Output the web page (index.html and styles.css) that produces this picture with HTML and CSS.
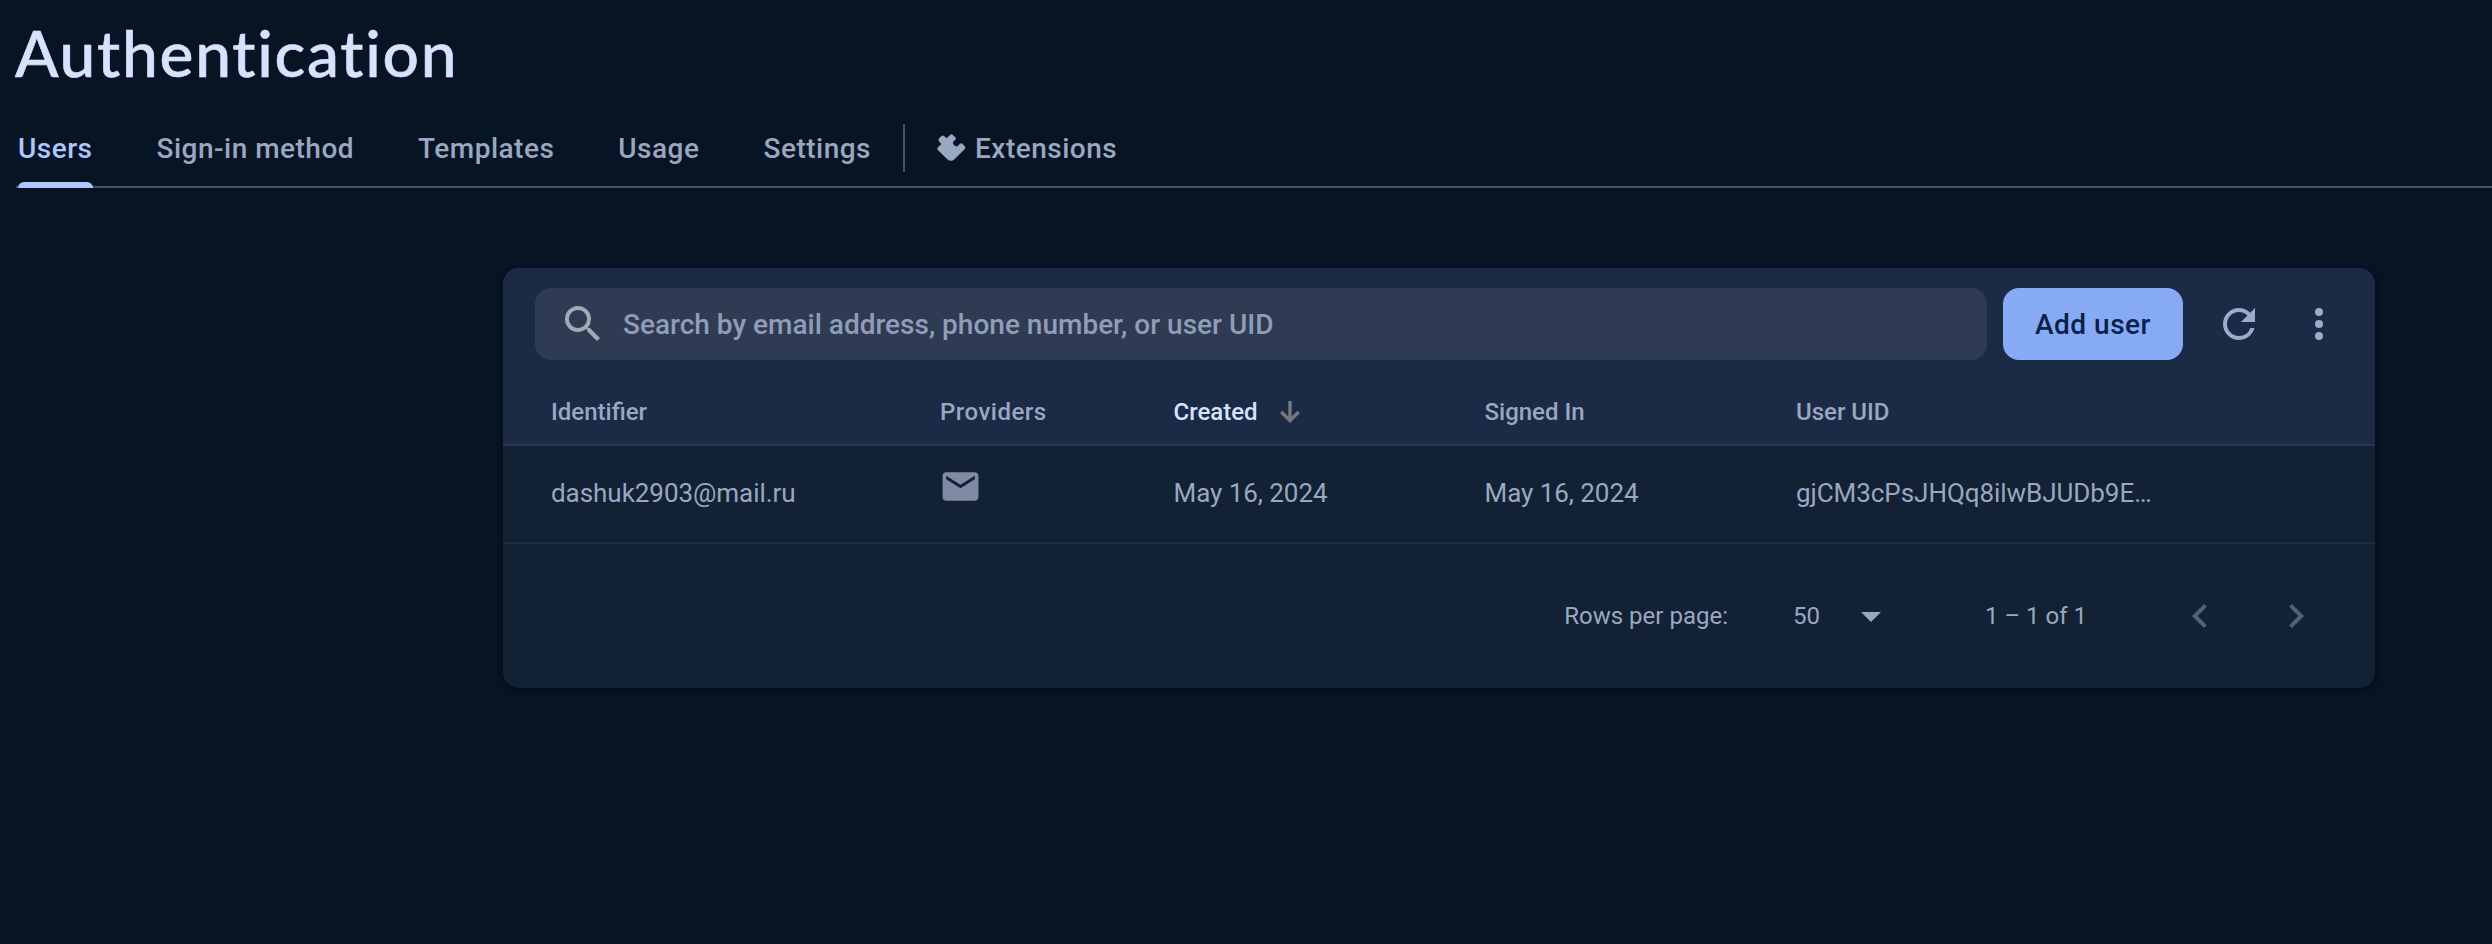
FILE: index.html
```html
<!DOCTYPE html>
<html lang="en">
<head>
<meta charset="utf-8">
<title>Authentication</title>
<link rel="stylesheet" href="styles.css">
</head>
<body>
<header class="page-header">
  <h1 class="page-title">Authentication</h1>
  <nav class="tabs">
    <a class="tab tab-active">Users</a>
    <a class="tab">Sign-in method</a>
    <a class="tab">Templates</a>
    <a class="tab">Usage</a>
    <a class="tab">Settings</a>
    <span class="tab-divider"></span>
    <a class="tab tab-extensions">
      <svg class="icon-extension" viewBox="0 0 28 28"><path d="M1.9 4.6 4.6 2Q5.9 1 7 2L9.700 4.200 13.300.8Q14.500-.2 15.700.8L18.500 3.400Q19.500 4.500 18.500 5.600L15.800 8.200Q16.300 12 20.200 12.500L23 9.700Q24.200 8.800 25.300 9.700L28 12.500Q28.700 13.600 28 14.700L17.500 25.200Q14 28.400 10.300 25.200L.8 16Q-.3 14.700.8 13.600L4.300 10.100 1.900 7.200Q.8 5.900 1.900 4.600Z"/></svg>
      <span>Extensions</span>
    </a>
  </nav>
</header>
<main class="card">
  <section class="toolbar">
    <label class="search">
      <svg class="icon-search" viewBox="0 0 24 24"><path d="M15.500 14h-.79l-.28-.27A6.471 6.471 0 0 0 16 9.500 6.500 6.500 0 1 0 9.500 16c1.610 0 3.090-.59 4.230-1.570l.27.28v.79l5 4.990L20.490 19l-4.990-5zm-6 0C7.010 14 5 11.990 5 9.500S7.010 5 9.500 5 14 7.010 14 9.500 11.990 14 9.500 14z"/></svg>
      <span>Search by email address, phone number, or user UID</span>
    </label>
    <button class="add-user">Add user</button>
    <svg class="icon-action icon-refresh" viewBox="0 0 24 24"><path d="M17.650 6.350A7.958 7.958 0 0 0 12 4c-4.420 0-7.990 3.580-7.990 8s3.570 8 7.990 8c3.730 0 6.840-2.550 7.730-6h-2.080A5.990 5.990 0 0 1 12 18c-3.310 0-6-2.690-6-6s2.690-6 6-6c1.660 0 3.140.69 4.220 1.780L13 11h7V4l-2.350 2.350z"/></svg>
    <svg class="icon-action icon-more" viewBox="0 0 24 24"><circle cx="12" cy="6" r="2"/><circle cx="12" cy="12" r="2"/><circle cx="12" cy="18" r="2"/></svg>
  </section>
  <div class="row row-head">
    <span>Identifier</span>
    <span class="head-providers">Providers</span>
    <span class="sorted">Created
      <svg class="icon-sort" viewBox="0 0 20 22"><path d="M8.300 0h3.400v15.500l5.800-5.800L20 12.100 10 22 0 12.100l2.500-2.400 5.800 5.800z"/></svg>
    </span>
    <span>Signed In</span>
    <span>User UID</span>
  </div>
  <div class="row row-user">
    <span>dashuk2903@mail.ru</span>
    <svg class="icon-mail" viewBox="0 0 24 24"><path d="M20 4H4c-1.100 0-1.990.9-1.990 2L2 18c0 1.100.9 2 2 2h16c1.100 0 2-.9 2-2V6c0-1.100-.9-2-2-2zm0 4-8 5-8-5V6l8 5 8-5v2z"/></svg>
    <span>May 16, 2024</span>
    <span>May 16, 2024</span>
    <span class="uid">gjCM3cPsJHQq8ilwBJUDb9E…</span>
  </div>
  <footer class="pager">
    <span class="pager-label">Rows per page:</span>
    <span class="pager-size">50</span>
    <svg class="icon-caret" viewBox="0 0 20 10"><path d="M0 0h20L10 10z"/></svg>
    <span class="pager-range">1 – 1 of 1</span>
    <svg class="icon-chevron" viewBox="0 0 24 24"><path d="M15.410 7.410 14 6l-6 6 6 6 1.410-1.410L10.830 12z"/></svg>
    <svg class="icon-chevron" viewBox="0 0 24 24"><path d="M10 6 8.590 7.410 13.170 12l-4.580 4.590L10 18l6-6z"/></svg>
  </footer>
</main>
</body>
</html>
```
FILE: styles.css
```css
* { box-sizing: border-box; }
body {
  margin: 0;
  min-height: 944px;
  background: #071424;
  color: #9aa7c0;
  font-family: Roboto, sans-serif;
  overflow: hidden;
}
svg { display: block; flex: none; fill: currentColor; overflow: visible; }
.page-header { padding-left: 16px; }
.page-title {
  margin: 0 0 0 -1px;
  height: 120px;
  padding-top: 13px;
  font: 500 64px/80px Lato, sans-serif;
  font-variant-ligatures: none;
  letter-spacing: 1.75px;
  -webkit-text-stroke: 0.6px #d8e2ff;
  color: #d8e2ff;
}
.tabs {
  display: flex;
  height: 68px;
  padding-left: 2px;
  gap: 64px;
  border-bottom: 2px solid #465468;
  font-size: 28px;
  font-weight: 500;
  line-height: 58px;
  letter-spacing: 0.49px;
  white-space: nowrap;
}
.tab { display: flex; height: 68px; }
.tab-active { color: #b0c6ff; position: relative; }
.tab-active::after {
  content: "";
  position: absolute;
  left: 0;
  right: 0;
  bottom: 0;
  height: 6px;
  border-radius: 6px 6px 0 0;
  background: #b0c6ff;
}
.tab-divider { width: 2px; height: 48px; margin: 4px -32px 0; background: #465468; }
.tab-extensions { gap: 10px; align-items: flex-start; }
.icon-extension { width: 28px; height: 28px; margin-top: 14px; }
.card {
  width: 1872px;
  height: 420px;
  margin: 80px 0 0 503px;
  border-radius: 16px;
  background: #132134;
  box-shadow: 0 2px 6px rgba(0, 0, 0, 0.45);
  overflow: hidden;
  white-space: nowrap;
}
.toolbar {
  display: flex;
  align-items: center;
  height: 112px;
  padding: 0 32px;
  background: #1c2b45;
}
.search {
  display: flex;
  align-items: center;
  width: 1452px;
  height: 72px;
  padding-left: 24px;
  gap: 16px;
  border-radius: 16px;
  background: #2e3b53;
  color: #909db8;
  font-size: 28px;
  font-weight: 500;
}
.icon-search { width: 48px; height: 48px; color: #a3a9b3; }
.add-user {
  width: 180px;
  height: 72px;
  margin-left: 16px;
  padding: 0;
  border: 0;
  border-radius: 16px;
  background: #86aaf3;
  color: #0b1f4b;
  font: 500 28px Roboto, sans-serif;
  letter-spacing: 0.5px;
}
.icon-action { width: 48px; height: 48px; color: #9dabc8; }
.icon-refresh { margin-left: 32px; }
.icon-more { margin-left: 32px; }
.row {
  display: grid;
  grid-template-columns: 389px 233.5px 311px 311.5px 1fr;
  align-items: center;
  padding-left: 48px;
}
.row-head {
  height: 66px;
  border-bottom: 2px solid #293951;
  background: #1c2b45;
  font-size: 24px;
  font-weight: 500;
}
.head-providers { letter-spacing: 0.5px; }
.sorted { display: flex; align-items: center; gap: 22.5px; color: #d8e2ff; }
.icon-sort { width: 20px; height: 22px; color: #77787c; }
.row-user {
  height: 98px;
  padding-bottom: 2px;
  border-bottom: 2px solid #202e41;
  font-size: 26px;
  letter-spacing: -0.05px;
}
.icon-mail { width: 43px; height: 43px; margin: -14px 0 0 -1.5px; color: #7f8ba4; }
.pager {
  display: flex;
  align-items: center;
  justify-content: flex-end;
  height: 144px;
  padding-right: 55px;
  font-size: 24px;
}
.pager-size { margin-left: 65px; }
.icon-caret { width: 20px; height: 10px; margin: 2px 104px 0 41px; }
.pager-range { margin-right: 89px; }
.icon-chevron { width: 48px; height: 48px; color: #536174; }
.icon-chevron + .icon-chevron { margin-left: 48px; }
```
